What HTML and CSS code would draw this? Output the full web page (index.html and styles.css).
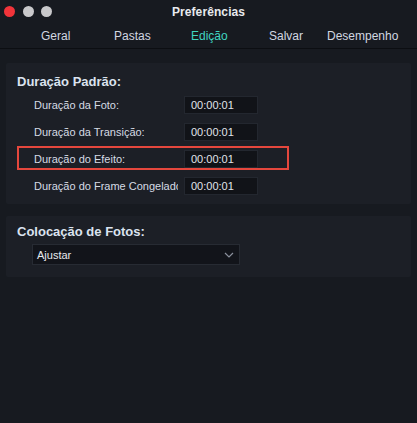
FILE: index.html
```html
<!DOCTYPE html>
<html lang="pt">
<head>
<meta charset="utf-8">
<title>Preferências</title>
<link rel="stylesheet" href="styles.css">
</head>
<body>
<div class="window">
  <div class="titlebar">
    <div class="lights">
      <span class="light red"></span>
      <span class="light gray"></span>
      <span class="light gray"></span>
    </div>
    <div class="title">Preferências</div>
  </div>
  <nav class="tabs">
    <span class="tab">Geral</span>
    <span class="tab">Pastas</span>
    <span class="tab active">Edição</span>
    <span class="tab">Salvar</span>
    <span class="tab">Desempenho</span>
  </nav>
  <main class="content">
    <section class="panel panel-dur">
      <h2 class="heading">Duração Padrão:</h2>
      <div class="row"><span class="label">Duração da Foto:</span><span class="field">00:00:01</span></div>
      <div class="row"><span class="label">Duração da Transição:</span><span class="field">00:00:01</span></div>
      <div class="row highlight"><span class="label">Duração do Efeito:</span><span class="field">00:00:01</span></div>
      <div class="row"><span class="label">Duração do Frame Congelado</span><span class="field">00:00:01</span></div>
    </section>
    <section class="panel panel-fotos">
      <h2 class="heading">Colocação de Fotos:</h2>
      <div class="select">
        <span>Ajustar</span>
        <svg class="chev" width="10" height="6" viewBox="0 0 10 6"><path d="M1 1 L5 5 L9 1" fill="none" stroke="#8a909c" stroke-width="1.2"/></svg>
      </div>
    </section>
  </main>
</div>
</body>
</html>
```
FILE: styles.css
```css
* { box-sizing: border-box; margin: 0; padding: 0; }
html, body { width: 417px; height: 423px; background: #171a20; overflow: hidden; }
body { font-family: "Liberation Sans", Arial, sans-serif; color: #d6dbe4; }
.window { width: 417px; height: 423px; display: flex; flex-direction: column; background: #171a20; }
.titlebar { height: 23px; position: relative; display: flex; align-items: center; justify-content: center; background: #171a20; }
.lights { position: absolute; left: 4px; top: 6px; display: flex; gap: 7.5px; }
.light { width: 11px; height: 11px; border-radius: 50%; display: block; }
.red { background: #f2343a; }
.gray { background: #c9c9cb; }
.title { font-size: 12px; font-weight: bold; color: #e8eaee; letter-spacing: 0.1px; }
.tabs { position: relative; height: 26px; display: flex; align-items: center; border-bottom: 1px solid #0c0e12; font-size: 12px; color: #d2d7e0; }
.tab { position: absolute; }
.tab:nth-child(1) { left: 41px; }
.tab:nth-child(2) { left: 114px; }
.tab:nth-child(3) { left: 191px; }
.tab:nth-child(4) { left: 269px; }
.tab:nth-child(5) { left: 327px; }
.tab.active { color: #40d4c0; }
.content { padding: 14px 6px 0 6px; display: flex; flex-direction: column; gap: 12px; }
.panel { background: #1c1f26; border-radius: 2px; padding: 11px 11px 0 11px; }
.panel-dur { height: 141px; }
.panel-dur .heading { margin-bottom: 1px; }
.panel-fotos { height: 61px; padding-top: 8px; }
.panel-fotos .heading { margin-bottom: 4px; }
.heading { font-size: 13px; font-weight: bold; color: #dbe3ef; line-height: 16px; }
.row { display: flex; align-items: center; height: 27px; padding-left: 17px; font-size: 11px; color: #d6dbe4; }
.label { width: 144px; margin-right: 6px; white-space: nowrap; overflow: hidden; }
.field { width: 74px; height: 18px; background: #111318; border: 1px solid #23272f; padding-left: 6px; line-height: 16px; font-size: 11px; color: #e0e4ea; }
.highlight { position: relative; }
.highlight::after { content: ""; position: absolute; left: 0; right: 111px; top: 1px; bottom: 2px; border: 2px solid #e5473d; }
.select { margin-left: 15px; width: 208px; height: 21px; background: #12141a; border: 1px solid #272b33; display: flex; align-items: center; justify-content: space-between; padding: 0 5px 0 4px; font-size: 11px; color: #e6e9ee; }
.chev { display: block; }
```
